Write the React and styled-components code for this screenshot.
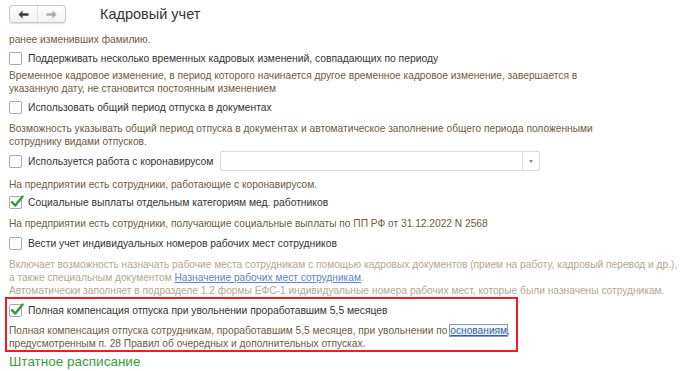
import React from "react";
import styled, { createGlobalStyle } from "styled-components";

const GlobalStyle = createGlobalStyle`
  html, body {
    margin: 0;
    padding: 0;
    background: #fff;
  }
  body {
    font-family: "Liberation Sans", Arial, sans-serif;
    font-size: 10.3px;
    color: #333;
  }
`;

const Page = styled.div`
  width: 700px;
  height: 371px;
  overflow: hidden;
`;

const Header = styled.div`
  display: flex;
  align-items: flex-start;
  height: 30px;
  padding: 5px 0 0 9px;
  box-sizing: border-box;
`;

const NavGroup = styled.div`
  display: flex;
  width: 57px;
  height: 18px;
  border: 1px solid #c9c9c9;
  border-radius: 3px;
  box-sizing: border-box;
  background: linear-gradient(#ffffff, #f1f1f1);
  box-shadow: 0 1px 1px rgba(0, 0, 0, 0.12);
`;

const NavButton = styled.div`
  flex: 1;
  display: flex;
  align-items: center;
  justify-content: center;
  & + & {
    border-left: 1px solid #e0e0e0;
  }
`;

const Title = styled.div`
  margin-left: 34px;
  margin-top: 1px;
  font-size: 14.5px;
  color: #333;
`;

const Content = styled.div`
  padding: 0 0 0 9px;
`;

const Desc = styled.div`
  margin-top: ${(p) => p.$mt || 0}px;
  font-size: 10.2px;
  line-height: 13px;
  color: ${(p) => (p.$muted ? "#b3a88f" : "#6d5c43")};
  white-space: nowrap;
`;

const Row = styled.div`
  display: flex;
  align-items: center;
  gap: 6px;
  height: ${(p) => p.$h || 18}px;
  margin-top: ${(p) => p.$mt || 0}px;
  font-size: 10.3px;
  color: #333;
  white-space: nowrap;
`;

const Box = styled.span`
  position: relative;
  width: 13px;
  height: 13px;
  box-sizing: border-box;
  border: 1px solid #a9a9a9;
  border-radius: 2px;
  background: #fff;
  flex: none;
  svg {
    position: absolute;
    left: 0px;
    top: -3px;
  }
`;

const Select = styled.div`
  display: flex;
  margin-left: 1px;
  width: 320px;
  height: 20px;
  border: 1px solid #d9d9d9;
  border-radius: 2px;
  box-sizing: border-box;
  background: #fff;
`;

const SelectField = styled.div`
  flex: 1;
`;

const SelectArrow = styled.div`
  width: 16px;
  border-left: 1px solid #e3e3e3;
  display: flex;
  align-items: center;
  justify-content: center;
  &::after {
    content: "";
    border-left: 2px solid transparent;
    border-right: 2px solid transparent;
    border-top: 3px solid #8c8c8c;
  }
`;

const Link = styled.a`
  color: ${(p) => (p.$muted ? "#5d86c6" : "#2f5fb3")};
  text-decoration: underline;
  cursor: pointer;
`;

const FocusLink = styled(Link)`
  outline: 1px solid #8e9cb4;
  background: #f4f7fc;
`;

const Highlight = styled.div`
  margin: 0 0 0 -4px;
  width: 513px;
  box-sizing: border-box;
  border: 2px solid #ee1c24;
  padding: 2px 0 0 2px;
`;

const Section = styled.div`
  margin-top: 2px;
  font-size: 13.5px;
  line-height: 16px;
  color: #3b9c3f;
`;

function Check({ checked }) {
  return (
    <Box>
      {checked && (
        <svg width="15" height="15" viewBox="0 0 15 15">
          <path
            d="M2 8.2 L5.3 11.6 L12.6 2.6"
            fill="none"
            stroke="#2f9a3a"
            strokeWidth="2.4"
            strokeLinecap="round"
            strokeLinejoin="round"
          />
        </svg>
      )}
    </Box>
  );
}

function Arrow({ dir, color }) {
  return (
    <svg width="11" height="9" viewBox="0 0 11 9">
      {dir === "left" ? (
        <path d="M0.5 4.5 L4.5 0.5 L4.5 3.2 L10.5 3.2 L10.5 5.8 L4.5 5.8 L4.5 8.5 Z" fill={color} />
      ) : (
        <path d="M10.5 4.5 L6.5 0.5 L6.5 3.2 L0.5 3.2 L0.5 5.8 L6.5 5.8 L6.5 8.5 Z" fill={color} />
      )}
    </svg>
  );
}

export default function App() {
  return (
    <Page>
      <GlobalStyle />
      <Header>
        <NavGroup>
          <NavButton>
            <Arrow dir="left" color="#3c3c3c" />
          </NavButton>
          <NavButton>
            <Arrow dir="right" color="#a8a8a8" />
          </NavButton>
        </NavGroup>
        <Title>Кадровый учет</Title>
      </Header>
      <Content>
        <Desc $mt={3}>ранее изменивших фамилию.</Desc>
        <Row $mt={3}>
          <Check />
          Поддерживать несколько временных кадровых изменений, совпадающих по периоду
        </Row>
        <Desc $mt={2}>
          Временное кадровое изменение, в период которого начинается другое временное кадровое изменение, завершается в
          <br />
          указанную дату, не становится постоянным изменением
        </Desc>
        <Row $mt={3}>
          <Check />
          Использовать общий период отпуска в документах
        </Row>
        <Desc $mt={6}>
          Возможность указывать общий период отпуска в документах и автоматическое заполнение общего периода положенными
          <br />
          сотруднику видами отпусков.
        </Desc>
        <Row $h={20} $mt={3}>
          <Check />
          Используется работа с коронавирусом
          <Select>
            <SelectField />
            <SelectArrow />
          </Select>
        </Row>
        <Desc $mt={7}>На предприятии есть сотрудники, работающие с коронавирусом.</Desc>
        <Row $mt={2}>
          <Check checked />
          Социальные выплаты отдельным категориям мед. работников
        </Row>
        <Desc $mt={6}>На предприятии есть сотрудники, получающие социальные выплаты по ПП РФ от 31.12.2022 N 2568</Desc>
        <Row $mt={4}>
          <Check />
          Вести учет индивидуальных номеров рабочих мест сотрудников
        </Row>
        <Desc $muted $mt={6}>
          Включает возможность назначать рабочие места сотрудникам с помощью кадровых документов (прием на работу, кадровый перевод и др.),
          <br />
          а также специальным документом <Link $muted>Назначение рабочих мест сотрудникам</Link>.
          <br />
          Автоматически заполняет в подразделе 1.2 формы ЕФС-1 индивидуальные номера рабочих мест, которые были назначены сотрудникам.
        </Desc>
        <Highlight>
          <Row>
            <Check checked />
            Полная компенсация отпуска при увольнении проработавшим 5,5 месяцев
          </Row>
          <Desc $mt={5}>
            Полная компенсация отпуска сотрудникам, проработавшим 5,5 месяцев, при увольнении по <FocusLink>основаниям</FocusLink>,
            <br />
            предусмотренным п. 28 Правил об очередных и дополнительных отпусках.
          </Desc>
        </Highlight>
        <Section>Штатное расписание</Section>
      </Content>
    </Page>
  );
}
